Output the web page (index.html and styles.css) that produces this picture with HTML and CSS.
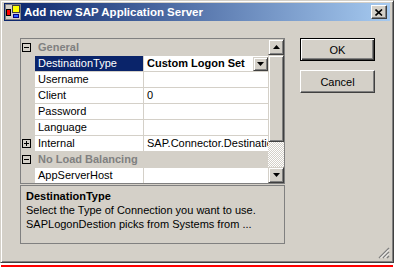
FILE: index.html
```html
<!DOCTYPE html>
<html lang="en">
<head>
    <meta charset="utf-8">
    <title>Add new SAP Application Server</title>
    <link rel="stylesheet" href="styles.css">
</head>
<body>
    <div class="window">
        <div class="titlebar">
            <svg class="appIcon" width="16" height="16" viewBox="0 0 16 16">
                <rect x="0.5" y="0.5" width="15" height="15" fill="#d4d0c8" stroke="#808080"/>
                <rect x="1.5" y="5.5" width="4" height="6" fill="#ff0000" stroke="#000"/>
                <rect x="7.5" y="1.5" width="7" height="7" fill="#ffff00" stroke="#404040"/>
                <rect x="8.5" y="10.5" width="5" height="3" fill="#3060ff" stroke="#000080"/>
            </svg>
            <span class="title">Add new SAP Application Server</span>
            <div class="closeBtn">
                <svg width="8" height="7" viewBox="0 0 8 7">
                    <path d="M0.5 0.5 L7 6.5 M7 0.5 L0.5 6.5" stroke="#000" stroke-width="1.6"/>
                </svg>
            </div>
        </div>
        <div class="client">
            <div class="gridPane">
                <div class="propGrid">
                    <div class="rows">
                        <div class="cat">
                            <span class="margin"><span class="toggle"></span></span>
                            <span class="catName">General</span>
                        </div>
                        <div class="prop selected">
                            <span class="margin"></span>
                            <span class="name">DestinationType</span>
                            <span class="value bold"><span class="valueText">Custom Logon Set</span>
                                <span class="dropBtn">
                                    <svg width="7" height="4" viewBox="0 0 7 4"><path d="M0 0 H7 L3.5 4 Z" fill="#000"/></svg>
                                </span>
                            </span>
                        </div>
                        <div class="prop">
                            <span class="margin"></span>
                            <span class="name">Username</span>
                            <span class="value"></span>
                        </div>
                        <div class="prop">
                            <span class="margin"></span>
                            <span class="name">Client</span>
                            <span class="value">0</span>
                        </div>
                        <div class="prop">
                            <span class="margin"></span>
                            <span class="name">Password</span>
                            <span class="value"></span>
                        </div>
                        <div class="prop">
                            <span class="margin"></span>
                            <span class="name">Language</span>
                            <span class="value"></span>
                        </div>
                        <div class="prop">
                            <span class="margin"><span class="toggle plus"></span></span>
                            <span class="name">Internal</span>
                            <span class="value"><span class="valueText">SAP.Connector.DestinationInternal</span></span>
                        </div>
                        <div class="cat">
                            <span class="margin"><span class="toggle"></span></span>
                            <span class="catName">No Load Balancing</span>
                        </div>
                        <div class="prop">
                            <span class="margin"></span>
                            <span class="name">AppServerHost</span>
                            <span class="value"></span>
                        </div>
                    </div>
                    <div class="vscroll">
                        <div class="sbBtn">
                            <svg width="7" height="4" viewBox="0 0 7 4"><path d="M0 4 H7 L3.5 0 Z" fill="#000"/></svg>
                        </div>
                        <div class="sbThumb"></div>
                        <div class="sbTrack"></div>
                        <div class="sbBtn">
                            <svg width="7" height="4" viewBox="0 0 7 4"><path d="M0 0 H7 L3.5 4 Z" fill="#000"/></svg>
                        </div>
                    </div>
                </div>
                <div class="desc">
                    <div class="descTitle">DestinationType</div>
                    <div>Select the Type of Connection you want to use.</div>
                    <div>SAPLogonDestion picks from Systems from ...</div>
                </div>
            </div>
            <div class="buttons">
                <div class="btn default">OK</div>
                <div class="btn">Cancel</div>
            </div>
        </div>
        <svg class="grip" width="12" height="12" viewBox="0 0 12 12">
            <path d="M11 1 L1 11 M11 5 L5 11 M11 9 L9 11" stroke="#808080" stroke-width="1.4"/>
            <path d="M11 2.5 L2.5 11 M11 6.5 L6.5 11" stroke="#fff" stroke-width="1"/>
        </svg>
    </div>
    <div class="redLine"></div>
</body>
</html>
```

FILE: styles.css
```css
body {
    margin: 0;
    background: #fff;
    font-family: "Liberation Sans", Arial, sans-serif;
    font-size: 11px;
    color: #000;
}

.window {
    position: relative;
    width: 394px;
    height: 263px;
    box-sizing: border-box;
    padding: 2px 3px 0 3px;
    background: #d4d0c8;
    border: 1px solid;
    border-color: #d4d0c8 #404040 #404040 #d4d0c8;
    box-shadow: inset 1px 1px #fff, inset -1px -1px #808080;
}

/* Title bar */
.titlebar {
    height: 18px;
    display: flex;
    align-items: center;
    background: linear-gradient(to right, #0a246a, #a6caf0);
}

.appIcon {
    margin-left: 1px;
    flex: none;
}

.title {
    margin-left: 3px;
    color: #fff;
    font-weight: bold;
    font-size: 11.5px;
    white-space: nowrap;
}

.closeBtn {
    margin-left: auto;
    margin-right: 3px;
    width: 16px;
    height: 14px;
    box-sizing: border-box;
    display: flex;
    align-items: center;
    justify-content: center;
    background: #d4d0c8;
    border: 1px solid;
    border-color: #fff #404040 #404040 #fff;
    box-shadow: inset -1px -1px #808080;
}

/* Client area */
.client {
    display: flex;
    padding: 17px 0 0 16px;
}

.gridPane {
    width: 265px;
    display: flex;
    flex-direction: column;
}

.propGrid {
    height: 146px;
    box-sizing: border-box;
    border: 1px solid #808080;
    display: flex;
    background: #fff;
}

.rows {
    flex: 1;
    overflow: hidden;
    padding-top: 1px;
    background: #d4d0c8;
}

.cat, .prop {
    display: flex;
    height: 15px;
    line-height: 15px;
    border-bottom: 1px solid #d4d0c8;
    white-space: nowrap;
}

.margin {
    width: 14px;
    flex: none;
    display: flex;
    align-items: center;
    background: #d4d0c8;
}

.toggle {
    position: relative;
    width: 9px;
    height: 9px;
    box-sizing: border-box;
    margin-left: 1px;
    border: 1px solid #000;
}

.toggle:before {
    content: '';
    position: absolute;
    left: 1px;
    top: 3px;
    width: 5px;
    height: 1px;
    background: #000;
}

.toggle.plus:after {
    content: '';
    position: absolute;
    left: 3px;
    top: 1px;
    width: 1px;
    height: 5px;
    background: #000;
}

.catName {
    padding-left: 3px;
    font-weight: bold;
    color: #808080;
}

.name {
    width: 109px;
    flex: none;
    padding-left: 3px;
    box-sizing: border-box;
    background: #fff;
    border-right: 1px solid #d4d0c8;
    overflow: hidden;
}

.prop.selected .name {
    background: #0a246a;
    color: #fff;
}

.value {
    flex: 1;
    min-width: 0;
    display: flex;
    padding-left: 3px;
    background: #fff;
    overflow: hidden;
}

.value.bold {
    font-weight: bold;
}

.valueText {
    flex: 1;
    min-width: 0;
    overflow: hidden;
}

.dropBtn {
    flex: none;
    width: 15px;
    height: 14px;
    margin-top: 1px;
    box-sizing: border-box;
    display: flex;
    align-items: center;
    justify-content: center;
    background: #d4d0c8;
    border: 1px solid;
    border-color: #d4d0c8 #404040 #404040 #d4d0c8;
    box-shadow: inset 1px 1px #fff, inset -1px -1px #808080;
}

/* Scrollbar */
.vscroll {
    width: 16px;
    flex: none;
    display: flex;
    flex-direction: column;
}

.sbBtn, .sbThumb {
    box-sizing: border-box;
    background: #d4d0c8;
    border: 1px solid;
    border-color: #d4d0c8 #404040 #404040 #d4d0c8;
    box-shadow: inset 1px 1px #fff, inset -1px -1px #808080;
}

.sbBtn {
    height: 16px;
    display: flex;
    align-items: center;
    justify-content: center;
}

.sbThumb {
    height: 87px;
}

.sbTrack {
    flex: 1;
    background: repeating-conic-gradient(#d4d0c8 0 25%, #fff 0 50%) 0 0 / 2px 2px;
}

/* Description panel */
.desc {
    height: 59px;
    margin-top: 1px;
    box-sizing: border-box;
    border: 1px solid #808080;
    padding: 3px 0 0 5px;
    line-height: 14px;
    white-space: nowrap;
}

.descTitle {
    font-weight: bold;
}

/* Buttons */
.buttons {
    margin-left: 15px;
    display: flex;
    flex-direction: column;
    gap: 9px;
}

.btn {
    width: 75px;
    height: 23px;
    box-sizing: border-box;
    display: flex;
    align-items: center;
    justify-content: center;
    background: #d4d0c8;
    border: 1px solid;
    border-color: #fff #404040 #404040 #fff;
    box-shadow: inset -1px -1px #808080;
}

.btn.default {
    border-color: #000;
    box-shadow: inset 1px 1px #fff, inset -1px -1px #404040, inset -2px -2px #808080;
}

.grip {
    position: absolute;
    right: 3px;
    bottom: 3px;
}

.redLine {
    height: 2px;
    margin: 2px 1px 0 1px;
    background: #ff0000;
}
```
